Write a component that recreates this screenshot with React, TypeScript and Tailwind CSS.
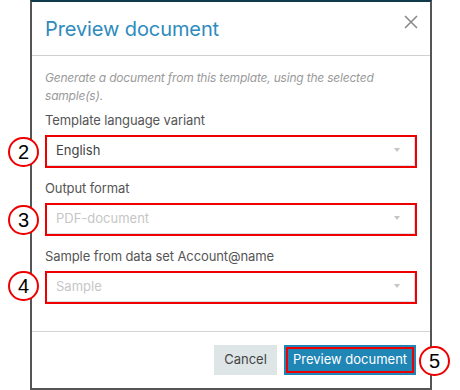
import { ReactNode } from 'react';

function Callout({ n, className }: { n: number; className: string }) {
  return (
    <div
      className={`absolute w-[31px] h-[30px] rounded-full border-2 border-[#ee0000] bg-white flex items-center justify-center text-[20px] leading-none text-black font-['Liberation_Sans',Arial,sans-serif] ${className}`}
    >
      {n}
    </div>
  );
}

function Field({ label, value, placeholder }: { label: string; value: string; placeholder?: boolean }) {
  return (
    <div className="mb-[11px]">
      <div className="text-[13px] leading-[18px] tracking-[-0.1px] text-[#555] mb-[6px]">{label}</div>
      <div className="h-[33px] border-2 border-[#ee0000]">
        <div className="h-full flex items-center justify-between pl-[9px] pr-[14px] border-r border-b border-[#dcdfe1]">
          <span className={`text-[13px] ${placeholder ? 'text-[#c6c6c6]' : 'text-[#444]'}`}>{value}</span>
          <span className="w-0 h-0 mb-[3px] border-x-[3px] border-x-transparent border-t-[4px] border-t-[#c4c4c4]" />
        </div>
      </div>
    </div>
  );
}

function Dialog({ children }: { children: ReactNode }) {
  return (
    <div className="ml-[30px] w-[402px] h-[390px] border-x-2 border-b-2 border-[#555] border-t-2 border-t-[#0e3a4c] flex flex-col bg-white">
      {children}
    </div>
  );
}

export default function App() {
  return (
    <div className="relative w-[460px] h-[390px] bg-white overflow-hidden font-['Inter',sans-serif]">
      <Dialog>
        {/* Header */}
        <div className="h-[54px] shrink-0 flex items-start justify-between pl-[13px] pr-[12px] border-b border-[#cfcfcf]">
          <h2 className="mt-[14px] text-[20px] leading-[26px] tracking-[-0.1px] text-[#2d8bbd] font-normal">Preview document</h2>
          <svg className="mt-[13px]" width="14" height="14" viewBox="0 0 14 14" fill="none">
            <path d="M1 1L13 13M13 1L1 13" stroke="#8a8a8a" strokeWidth="1.6" />
          </svg>
        </div>

        {/* Body */}
        <div className="flex-1 px-[13px] pt-[13px]">
          <p className="text-[12px] leading-[18px] tracking-[-0.2px] italic text-[#9a9a9a] mb-[6px]">
            Generate a document from this template, using the selected sample(s).
          </p>
          <Field label="Template language variant" value="English" />
          <Field label="Output format" value="PDF-document" placeholder />
          <Field label="Sample from data set Account@name" value="Sample" placeholder />
        </div>

        {/* Footer */}
        <div className="h-[57px] shrink-0 border-t border-[#d4d4d4] flex items-center justify-end gap-[7px] pr-[14px]">
          <button className="w-[63px] h-[30px] bg-[#dde5e7] text-[13px] text-[#444] flex items-center justify-center">
            Cancel
          </button>
          <button className="w-[132px] h-[30px] bg-[#1f86b6] p-[2px]">
            <span className="h-full border-2 border-[#ee0000] flex items-center justify-center text-[13px] text-white">
              Preview document
            </span>
          </button>
        </div>
      </Dialog>

      <Callout n={2} className="left-[8px] top-[137px]" />
      <Callout n={3} className="left-[8px] top-[205px]" />
      <Callout n={4} className="left-[8px] top-[271px]" />
      <Callout n={5} className="left-[419px] top-[346px]" />
    </div>
  );
}
